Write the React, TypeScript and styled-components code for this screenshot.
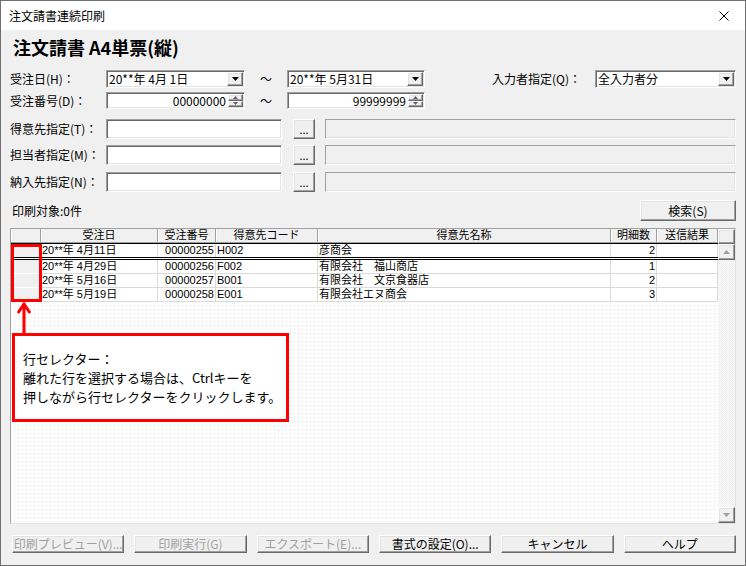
import React from "react";
import styled, { createGlobalStyle, css } from "styled-components";

const GlobalStyle = createGlobalStyle`
  html, body { margin: 0; padding: 0; background: #ffffff; }
  body {
    font-family: "Noto Sans CJK JP", "Noto Sans", sans-serif;
    font-size: 12px;
    color: #000;
  }
  * { box-sizing: border-box; }
`;

const sunken = css`
  border: 1px solid;
  border-color: #a0a0a0 #ffffff #ffffff #a0a0a0;
  box-shadow: inset 1px 1px 0 #696969, inset -1px -1px 0 #e3e3e3;
`;

const raised = css`
  border: 1px solid;
  border-color: #ffffff #696969 #696969 #ffffff;
  box-shadow: inset -1px -1px 0 #a0a0a0, inset 1px 1px 0 #e3e3e3;
  background: #f0f0f0;
`;

const Window = styled.div`
  position: relative;
  width: 746px;
  height: 566px;
  border: 1px solid #6f6f6f;
  background: #f0f0f0;
  display: flex;
  flex-direction: column;
  overflow: hidden;
`;

const TitleBar = styled.div`
  height: 29px;
  flex-shrink: 0;
  background: #ffffff;
  display: flex;
  align-items: center;
  justify-content: space-between;
  padding: 0 16px 0 8px;
  font-size: 12px;
  line-height: 1;
`;

const Body = styled.div`
  flex: 1;
  display: flex;
  flex-direction: column;
  padding: 0 9px 12px;
`;

const Heading = styled.div`
  height: 34px;
  display: flex;
  align-items: center;
  padding-left: 3px;
  font-size: 18px;
  font-weight: 700;
  line-height: 1;
`;

const FormRow = styled.div<{ $h: number; $mt: number }>`
  display: flex;
  align-items: center;
  height: ${(p) => p.$h}px;
  margin-top: ${(p) => p.$mt}px;
`;

const Label = styled.div`
  width: 96px;
  flex-shrink: 0;
  white-space: nowrap;
  line-height: 1;
`;

const RightLabel = styled.div`
  margin-left: auto;
  margin-right: 14px;
  white-space: nowrap;
  line-height: 1;
`;

const Tilde = styled.div`
  width: 42px;
  flex-shrink: 0;
  text-align: center;
  line-height: 1;
`;

const Combo = styled.div<{ $w: number }>`
  ${sunken};
  width: ${(p) => p.$w}px;
  height: 18px;
  background: #ffffff;
  padding: 1px;
  display: flex;
  flex-shrink: 0;
`;

const ComboText = styled.div`
  flex: 1;
  padding-left: 1px;
  display: flex;
  align-items: center;
  line-height: 1;
  white-space: nowrap;
`;

const DropButton = styled.div`
  ${raised};
  width: 16px;
  display: flex;
  align-items: center;
  justify-content: center;
`;

const Spin = styled.div<{ $w: number }>`
  ${sunken};
  width: ${(p) => p.$w}px;
  height: 17px;
  background: #ffffff;
  padding: 1px;
  display: flex;
  flex-shrink: 0;
`;

const SpinText = styled.div`
  flex: 1;
  padding-right: 2px;
  display: flex;
  align-items: center;
  justify-content: flex-end;
  line-height: 1;
`;

const SpinButtons = styled.div`
  width: 15px;
  display: flex;
  flex-direction: column;
`;

const SpinBtn = styled.div`
  ${raised};
  flex: 1;
  display: flex;
  align-items: center;
  justify-content: center;
`;

const TextInput = styled.div`
  ${sunken};
  width: 176px;
  height: 20px;
  background: #ffffff;
  flex-shrink: 0;
`;

const DotsButton = styled.div`
  ${raised};
  width: 22px;
  height: 20px;
  margin-left: 11px;
  flex-shrink: 0;
  display: flex;
  align-items: flex-end;
  justify-content: center;
  font-size: 11px;
  line-height: 1;
  padding-bottom: 3px;
`;

const ReadOnlyField = styled.div`
  flex: 1;
  height: 20px;
  margin-left: 10px;
  border: 1px solid;
  border-color: #a0a0a0 #ffffff #ffffff #a0a0a0;
  box-shadow: inset -1px -1px 0 #e3e3e3;
  background: #f0f0f0;
`;

const InfoRow = styled.div`
  height: 21px;
  margin-top: 8px;
  display: flex;
  align-items: center;
  justify-content: space-between;
`;

const InfoText = styled.div`
  padding-left: 2px;
  line-height: 1;
`;

const PushButton = styled.div<{ $w?: number; $disabled?: boolean }>`
  ${raised};
  ${(p) => (p.$w ? `width: ${p.$w}px;` : "flex: 1;")}
  height: 100%;
  display: flex;
  align-items: center;
  justify-content: center;
  line-height: 1;
  white-space: nowrap;
  color: ${(p) => (p.$disabled ? "#a0a0a0" : "#000")};
`;

const Grid = styled.div`
  margin-top: 7px;
  height: 296px;
  width: 726px;
  border: 1px solid;
  border-color: #a0a0a0 #e3e3e3 #e3e3e3 #a0a0a0;
  background: #ffffff;
  display: flex;
  flex-shrink: 0;
  font-family: "Liberation Sans", "Noto Sans CJK JP", sans-serif;
  font-size: 11px;
`;

const GridMain = styled.div`
  flex: 1;
  display: flex;
  flex-direction: column;
`;

const HeaderRow = styled.div`
  display: flex;
  height: 14px;
  flex-shrink: 0;
`;

const HeaderCell = styled.div<{ $w: number }>`
  width: ${(p) => p.$w}px;
  flex-shrink: 0;
  background: #f0f0f0;
  border-right: 1px solid #a0a0a0;
  border-bottom: 1px solid #a0a0a0;
  box-shadow: inset 1px 0 0 #ffffff;
  text-align: center;
  line-height: 13px;
  white-space: nowrap;
`;

const DataRow = styled.div<{ $current?: boolean }>`
  display: flex;
  flex-shrink: 0;
  height: ${(p) => (p.$current ? 17 : 14)}px;
  ${(p) =>
    p.$current &&
    css`
      border-top: 1px solid #000;
      border-bottom: 3px double #000;
    `}
`;

const SelectorCell = styled.div<{ $current?: boolean }>`
  width: 30px;
  flex-shrink: 0;
  background: #f0f0f0;
  border-right: 1px solid #a0a0a0;
  border-bottom: ${(p) => (p.$current ? "0" : "1px solid #ffffff")};
`;

const DataCell = styled.div<{ $w: number; $align?: string; $current?: boolean }>`
  width: ${(p) => p.$w}px;
  flex-shrink: 0;
  border-right: 1px solid #dadada;
  border-bottom: ${(p) => (p.$current ? "0" : "1px solid #dadada")};
  text-align: ${(p) => p.$align || "left"};
  padding: 0 1px;
  line-height: 13px;
  white-space: nowrap;
`;

const EmptyArea = styled.div`
  flex: 1;
  background-color: #ffffff;
  background-image: linear-gradient(90deg, #ffffff 3px, transparent 3px),
    linear-gradient(#ffffff 3px, #dcdcdc 3px);
  background-size: 4px 4px;
`;

const ScrollBar = styled.div`
  width: 17px;
  flex-shrink: 0;
  display: flex;
  flex-direction: column;
`;

const ScrollCorner = styled.div`
  ${raised};
  height: 15px;
`;

const ScrollBtn = styled.div`
  ${raised};
  height: 16px;
  display: flex;
  align-items: center;
  justify-content: center;
`;

const ScrollTrack = styled.div`
  flex: 1;
  background-color: #f4f4f4;
  background-image: conic-gradient(#ffffff 25%, #ebebeb 0 50%, #ffffff 0 75%, #ebebeb 0);
  background-size: 2px 2px;
`;

const ButtonRow = styled.div`
  display: flex;
  gap: 10px;
  height: 18px;
  margin-top: 11px;
  padding-left: 2px;
`;

const RedBox = styled.div`
  position: absolute;
  left: 10px;
  top: 243px;
  width: 31px;
  height: 58px;
  border: 3px solid #ff0000;
`;

const Arrow = styled.svg`
  position: absolute;
  left: 14px;
  top: 300px;
`;

const Callout = styled.div`
  position: absolute;
  left: 11px;
  top: 332px;
  width: 277px;
  height: 89px;
  border: 3px solid #ff0000;
  background: #ffffff;
  padding: 13px 0 0 8px;
  font-size: 13px;
  line-height: 19px;
  white-space: nowrap;
`;

const DownTri = () => (
  <svg width="7" height="4" viewBox="0 0 7 4">
    <polygon points="0,0 7,0 3.5,4" fill="#000" />
  </svg>
);

const SpinUp = () => (
  <svg width="5" height="3" viewBox="0 0 5 3">
    <polygon points="0,3 5,3 2.5,0" fill="#606060" />
  </svg>
);

const SpinDown = () => (
  <svg width="5" height="3" viewBox="0 0 5 3">
    <polygon points="0,0 5,0 2.5,3" fill="#606060" />
  </svg>
);

const ScrollTri = ({ up }: { up?: boolean }) => (
  <svg width="7" height="4" viewBox="0 0 7 4">
    <polygon points={up ? "0,4 7,4 3.5,0" : "0,0 7,0 3.5,4"} fill="#a0a0a0" />
  </svg>
);

const cols = [
  { key: "date", label: "受注日", w: 117, align: "left" },
  { key: "no", label: "受注番号", w: 58, align: "right" },
  { key: "code", label: "得意先コード", w: 102, align: "left" },
  { key: "name", label: "得意先名称", w: 293, align: "left" },
  { key: "count", label: "明細数", w: 46, align: "right" },
  { key: "result", label: "送信結果", w: 61, align: "left" },
] as const;

type RowData = Record<(typeof cols)[number]["key"], string>;

const rows: RowData[] = [
  { date: "20**年 4月11日", no: "00000255", code: "H002", name: "彦商会", count: "2", result: "" },
  { date: "20**年 4月29日", no: "00000256", code: "F002", name: "有限会社　福山商店", count: "1", result: "" },
  { date: "20**年 5月16日", no: "00000257", code: "B001", name: "有限会社　文京食器店", count: "2", result: "" },
  { date: "20**年 5月19日", no: "00000258", code: "E001", name: "有限会社エヌ商会", count: "3", result: "" },
];

const lookupRows = [
  { label: "得意先指定(T)：", mt: 10 },
  { label: "担当者指定(M)：", mt: 6 },
  { label: "納入先指定(N)：", mt: 7 },
];

const buttons = [
  { label: "印刷プレビュー(V)...", disabled: true },
  { label: "印刷実行(G)", disabled: true },
  { label: "エクスポート(E)...", disabled: true },
  { label: "書式の設定(O)...", disabled: false },
  { label: "キャンセル", disabled: false },
  { label: "ヘルプ", disabled: false },
];

export default function App() {
  return (
    <>
      <GlobalStyle />
      <Window>
        <TitleBar>
          <span>注文請書連続印刷</span>
          <svg width="10" height="10" viewBox="0 0 10 10">
            <path d="M0.5 0.5 L9.5 9.5 M9.5 0.5 L0.5 9.5" stroke="#000" strokeWidth="1" />
          </svg>
        </TitleBar>
        <Body>
          <Heading>注文請書 A4単票(縦)</Heading>

          <FormRow $h={18} $mt={6}>
            <Label>受注日(H)：</Label>
            <Combo $w={139}>
              <ComboText>20**年 4月 1日</ComboText>
              <DropButton>
                <DownTri />
              </DropButton>
            </Combo>
            <Tilde>～</Tilde>
            <Combo $w={138}>
              <ComboText>20**年 5月31日</ComboText>
              <DropButton>
                <DownTri />
              </DropButton>
            </Combo>
            <RightLabel>入力者指定(Q)：</RightLabel>
            <Combo $w={141}>
              <ComboText>全入力者分</ComboText>
              <DropButton>
                <DownTri />
              </DropButton>
            </Combo>
          </FormRow>

          <FormRow $h={17} $mt={4}>
            <Label>受注番号(D)：</Label>
            <Spin $w={139}>
              <SpinText>00000000</SpinText>
              <SpinButtons>
                <SpinBtn>
                  <SpinUp />
                </SpinBtn>
                <SpinBtn>
                  <SpinDown />
                </SpinBtn>
              </SpinButtons>
            </Spin>
            <Tilde>～</Tilde>
            <Spin $w={138}>
              <SpinText>99999999</SpinText>
              <SpinButtons>
                <SpinBtn>
                  <SpinUp />
                </SpinBtn>
                <SpinBtn>
                  <SpinDown />
                </SpinBtn>
              </SpinButtons>
            </Spin>
          </FormRow>

          {lookupRows.map((r) => (
            <FormRow key={r.label} $h={20} $mt={r.mt}>
              <Label>{r.label}</Label>
              <TextInput />
              <DotsButton>...</DotsButton>
              <ReadOnlyField />
            </FormRow>
          ))}

          <InfoRow>
            <InfoText>印刷対象:0件</InfoText>
            <PushButton $w={96}>検索(S)</PushButton>
          </InfoRow>

          <Grid>
            <GridMain>
              <HeaderRow>
                <HeaderCell $w={30} />
                {cols.map((c) => (
                  <HeaderCell key={c.key} $w={c.w}>
                    {c.label}
                  </HeaderCell>
                ))}
              </HeaderRow>
              {rows.map((r, i) => (
                <DataRow key={r.no} $current={i === 0}>
                  <SelectorCell $current={i === 0} />
                  {cols.map((c) => (
                    <DataCell key={c.key} $w={c.w} $align={c.align} $current={i === 0}>
                      {r[c.key]}
                    </DataCell>
                  ))}
                </DataRow>
              ))}
              <EmptyArea />
            </GridMain>
            <ScrollBar>
              <ScrollCorner />
              <ScrollBtn>
                <ScrollTri up />
              </ScrollBtn>
              <ScrollTrack />
              <ScrollBtn>
                <ScrollTri />
              </ScrollBtn>
            </ScrollBar>
          </Grid>

          <ButtonRow>
            {buttons.map((b) => (
              <PushButton key={b.label} $disabled={b.disabled}>
                {b.label}
              </PushButton>
            ))}
          </ButtonRow>
        </Body>

        <RedBox />
        <Arrow width="18" height="33" viewBox="0 0 18 33">
          <path d="M9 3 L9 33" stroke="#ff0000" strokeWidth="3" />
          <path d="M3 12 L9 3 L15 12" stroke="#ff0000" strokeWidth="3" fill="none" />
        </Arrow>
        <Callout>
          行セレクター：
          <br />
          離れた行を選択する場合は、Ctrlキーを
          <br />
          押しながら行セレクターをクリックします。
        </Callout>
      </Window>
    </>
  );
}
